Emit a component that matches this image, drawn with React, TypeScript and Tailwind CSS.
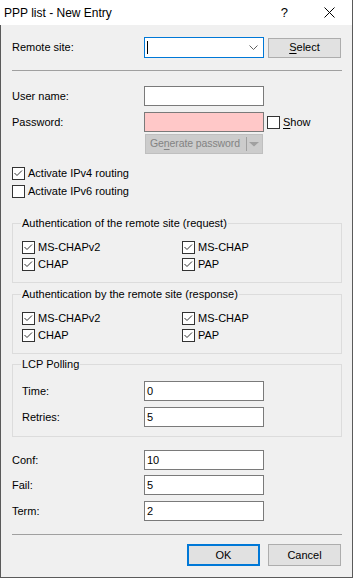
import React from "react";

const font = { fontFamily: '"Liberation Sans", Arial, sans-serif' };

function Check({ checked }: { checked?: boolean }) {
  return (
    <span className="w-[13px] h-[13px] border border-[#333333] bg-white flex items-center justify-center shrink-0">
      {checked && (
        <svg width="11" height="11" viewBox="0 0 11 11">
          <path d="M1.5 5 L4 7.5 L9 2.5" fill="none" stroke="#333333" strokeWidth="1" />
        </svg>
      )}
    </span>
  );
}

function CheckRow({ label, checked, w }: { label: string; checked?: boolean; w?: string }) {
  return (
    <div className={`flex items-center h-[13px] ${w ?? ""}`}>
      <Check checked={checked} />
      <span className="ml-[3px] text-[11px] leading-[13px] text-black whitespace-nowrap">{label}</span>
    </div>
  );
}

function Input({ value, pink }: { value?: string; pink?: boolean }) {
  return (
    <div
      className={`w-[120px] h-[20px] border border-[#7a7a7a] flex items-center pl-[2px] text-[11px] text-black ${
        pink ? "bg-[#ffc8c8]" : "bg-white"
      }`}
    >
      {value}
    </div>
  );
}

function Field({ label, value, labelW = "w-[132px]", mt }: { label: string; value?: string; labelW?: string; mt: string }) {
  return (
    <div className={`flex items-center ${mt}`}>
      <span className={`${labelW} text-[11px] text-black`}>{label}</span>
      <Input value={value} />
    </div>
  );
}

function Group({ title, children, h }: { title: string; children: React.ReactNode; h: string }) {
  return (
    <div className={`relative w-[330px] ${h} border border-[#dcdcdc]`}>
      <span className="absolute left-[8px] top-[-7px] bg-[#f0f0f0] px-[1px] text-[11px] leading-[13px] text-black whitespace-nowrap">
        {title}
      </span>
      {children}
    </div>
  );
}

function AuthGroup({ title, mt }: { title: string; mt: string }) {
  return (
    <div className={mt}>
      <Group title={title} h="h-[60px]">
        <div className="pl-[9px] pt-[17px] flex flex-col gap-[4px]">
          <div className="flex">
            <CheckRow label="MS-CHAPv2" checked w="w-[160px]" />
            <CheckRow label="MS-CHAP" checked />
          </div>
          <div className="flex">
            <CheckRow label="CHAP" checked w="w-[160px]" />
            <CheckRow label="PAP" checked />
          </div>
        </div>
      </Group>
    </div>
  );
}

export default function App() {
  return (
    <div className="w-[353px] h-[578px] flex flex-col border-r border-b border-[#5a5a5a] bg-[#f0f0f0] select-none" style={font}>
      {/* Title bar */}
      <div className="h-[25px] bg-white flex items-center shrink-0">
        <span className="ml-[4px] text-[12px] text-black">PPP list - New Entry</span>
        <span className="ml-auto text-[13px] text-black mr-[36px]">?</span>
        <svg width="11" height="11" viewBox="0 0 11 11" className="mr-[17px]">
          <path d="M0.5 0.5 L10.5 10.5 M10.5 0.5 L0.5 10.5" stroke="#000" strokeWidth="1" />
        </svg>
      </div>

      {/* Client area */}
      <div className="flex-1 border-l border-[#5a5a5a] pl-[11px] flex flex-col">
        {/* Remote site */}
        <div className="flex items-center mt-[12px]">
          <span className="w-[132px] text-[11px] text-black">Remote site:</span>
          <div className="w-[120px] h-[21px] border border-[#0078d7] bg-white flex items-center pl-[2px]">
            <span className="w-[1px] h-[13px] bg-black" />
            <svg width="9" height="5" viewBox="0 0 9 5" className="ml-auto mr-[5px]">
              <path d="M0.5 0.5 L4.5 4.5 L8.5 0.5" fill="none" stroke="#606060" strokeWidth="1" />
            </svg>
          </div>
          <div className="ml-[4px] w-[73px] h-[20px] bg-[#e1e1e1] border border-[#adadad] flex items-center justify-center text-[11px] text-black">
            <span>
              <span className="underline underline-offset-2">S</span>elect
            </span>
          </div>
        </div>

        <div className="mt-[12px] w-[330px] h-px bg-[#a0a0a0]" />

        <Field label="User name:" mt="mt-[15px]" />
        <div className="flex items-center mt-[6px]">
          <span className="w-[132px] text-[11px] text-black">Password:</span>
          <Input pink />
          <div className="ml-[3px] flex items-center">
            <Check />
            <span className="ml-[3px] text-[11px] text-black">
              <span className="underline underline-offset-2">S</span>how
            </span>
          </div>
        </div>
        <div className="flex mt-[2px]">
          <div className="ml-[133px] w-[118px] h-[20px] bg-[#cccccc] border border-[#bfbfbf] flex items-center text-[10.5px] text-[#838383]">
            <span className="ml-[4px] whitespace-nowrap tracking-[-0.1px]">
              Ge<span className="underline underline-offset-2">n</span>erate password
            </span>
            <span className="ml-auto w-px h-[14px] bg-[#a0a0a0]" />
            <svg width="11" height="5" viewBox="0 0 11 5" className="ml-[2px] mr-[2px]">
              <path d="M0 0 L10 0 L5 4.5 Z" fill="#a0a0a0" />
            </svg>
          </div>
        </div>

        <div className="mt-[13px]">
          <CheckRow label="Activate IPv4 routing" checked />
        </div>
        <div className="mt-[5px]">
          <CheckRow label="Activate IPv6 routing" />
        </div>

        <AuthGroup title="Authentication of the remote site (request)" mt="mt-[25px]" />
        <AuthGroup title="Authentication by the remote site (response)" mt="mt-[11px]" />

        <div className="mt-[10px]">
          <Group title="LCP Polling" h="h-[73px]">
            <div className="pl-[9px] pt-[16px]">
              <Field label="Time:" value="0" labelW="w-[122px]" mt="mt-0" />
              <Field label="Retries:" value="5" labelW="w-[122px]" mt="mt-[6px]" />
            </div>
          </Group>
        </div>

        <Field label="Conf:" value="10" mt="mt-[13px]" />
        <Field label="Fail:" value="5" mt="mt-[5px]" />
        <Field label="Term:" value="2" mt="mt-[6px]" />

        <div className="mt-[13px] w-[330px] h-px bg-[#a0a0a0]" />

        <div className="mt-[9px] flex w-[329px] justify-end gap-[8px]">
          <div className="w-[73px] h-[22px] bg-[#e1e1e1] border-2 border-[#0078d7] flex items-center justify-center text-[11px] text-black">
            OK
          </div>
          <div className="w-[73px] h-[22px] bg-[#e1e1e1] border border-[#adadad] flex items-center justify-center text-[11px] text-black">
            Cancel
          </div>
        </div>
      </div>
    </div>
  );
}
